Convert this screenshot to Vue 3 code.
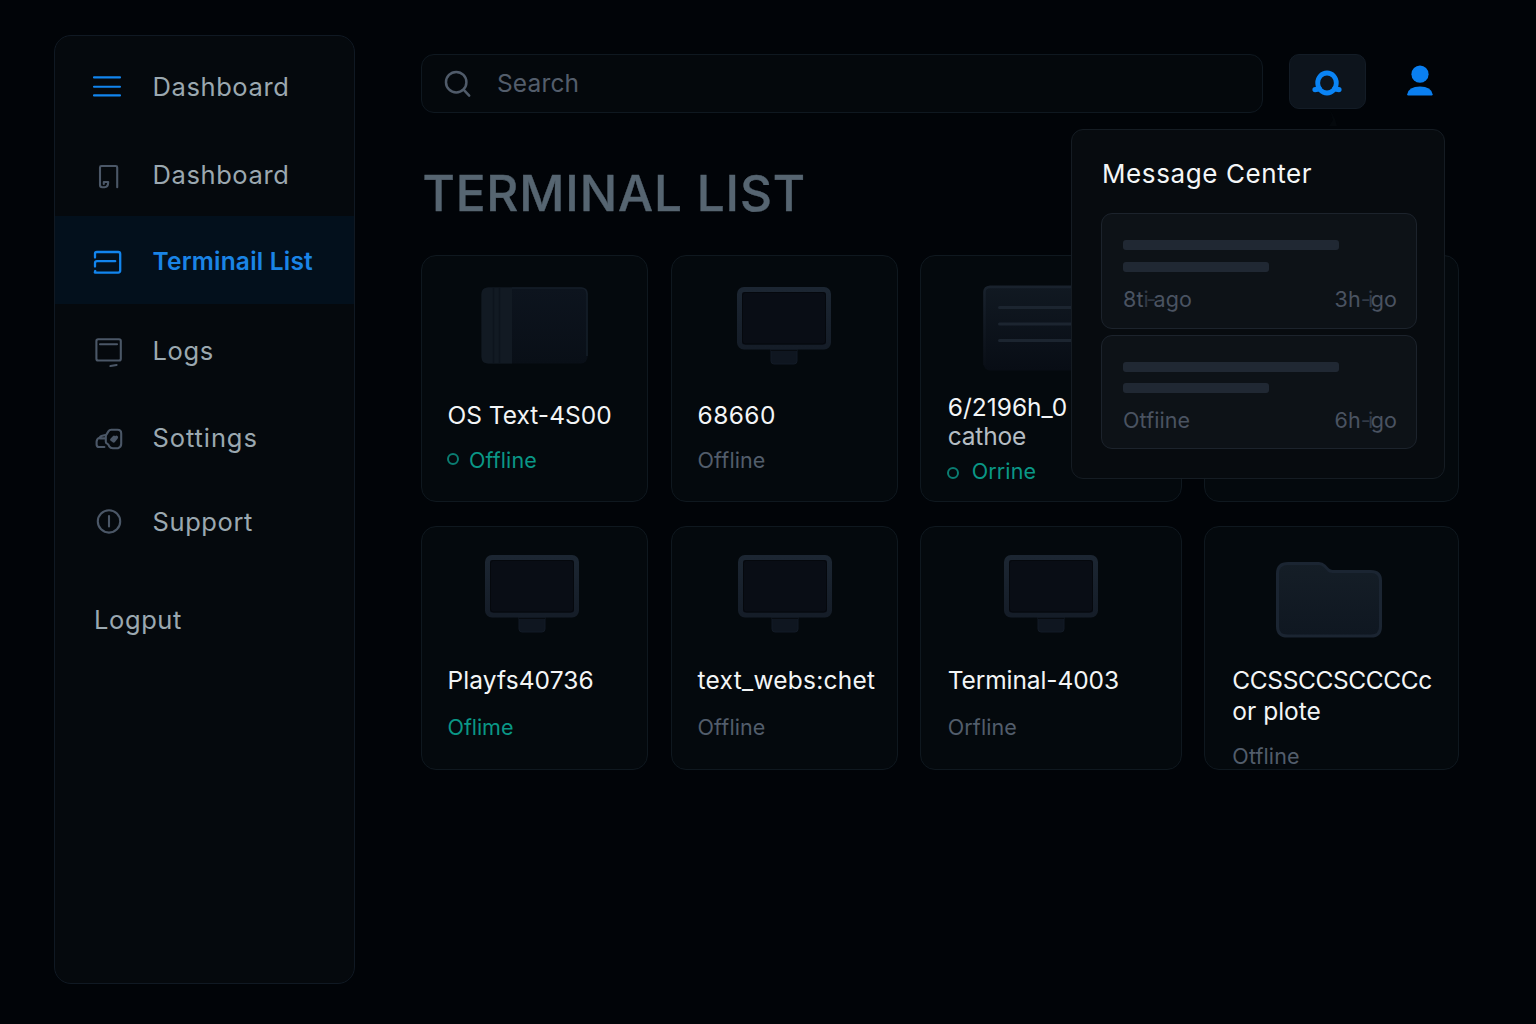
<script setup>
const nav = [
  { icon: 'menu', label: 'Dashboard' },
  { icon: 'board', label: 'Dashboard' },
  { icon: 'terminal', label: 'Terminail List', active: true },
  { icon: 'logs', label: 'Logs' },
  { icon: 'settings', label: 'Sottings' },
  { icon: 'support', label: 'Support' },
]

const terminals = [
  { id: 'os', art: 'drive', name: ['OS Text-4S00'], status: 'Offline', online: true, ring: true },
  { id: 'num', art: 'monitor', name: ['68660'], status: 'Offline' },
  { id: 'cathoe', art: 'rack', name: ['6/2196h_0', 'cathoe'], status: 'Orrine', online: true, ring: true },
  { id: 'blank', name: [] },
  { id: 'play', art: 'monitor', name: ['Playfs40736'], status: 'Oflime', online: true },
  { id: 'webs', art: 'monitor', name: ['text_webs:chet'], status: 'Offline' },
  { id: 'term', art: 'monitor', name: ['Terminal-4003'], status: 'Orfline' },
  { id: 'folder', art: 'folder', name: ['CCSSCCSCCCCc', 'or plote'], status: 'Otfline' },
]

// Each stamp is split in three: the middle part is set tighter and dimmer.
const messages = [
  { left: ['8t', 'i-', 'ago'], right: ['3h', '-i', 'go'] },
  { left: ['Otfiine', '', ''], right: ['6h', '-i', 'go'] },
]
</script>

<template>
  <div class="page">
    <aside class="sidebar">
      <nav>
        <a v-for="item in nav" :key="item.icon" class="nav-item" :class="[item.icon, { active: item.active }]">
          <svg class="nav-icon" viewBox="0 0 40 40" fill="none" stroke="currentColor" stroke-width="2.1" stroke-linecap="round" stroke-linejoin="round">
            <path v-if="item.icon === 'menu'" d="M6 9.4H32M6 18.7H32M6 27.4H32" />
            <path v-else-if="item.icon === 'board'" d="M29.2 33.2V13.4Q29.2 12 27.8 12H13.4Q12 12 12 13.4V31Q12 33.2 14.2 33.2H16.6Q20.2 33.2 20.2 28H15.8V30" />
            <path v-else-if="item.icon === 'terminal'" d="M7 17.6V13.6Q7 12 8.8 12H30.2Q32.2 12 32.2 14V30.6Q32.2 32.6 30.2 32.6H6.8L7.2 31M27.2 21.2H9Q7 21.2 7 23.2V26.6" />
            <template v-else-if="item.icon === 'logs'">
              <rect x="8.4" y="8.3" width="24.4" height="21.2" rx="1.8" />
              <path d="M12 13.2H29M22.4 35L28.6 34" />
            </template>
            <template v-else-if="item.icon === 'settings'">
              <path d="M18.4 15.6L20.4 12.4Q21.4 10.8 23.2 10.8H29.6Q33.2 10.8 33.2 14.4V24.8Q33.2 28.2 30 29.2H24.8Q22.4 29.2 21.2 27.4Q20.8 25.4 18.8 24.4Q17.8 24 17.8 22.4V17.6Q17.8 16.4 18.4 15.6Z" />
              <path d="M17.4 16L13.4 17Q12.4 17.4 11.6 18.6Q8.6 19.8 8.6 22.8V25.4Q8.6 28 11.2 28H16.4M12 19.4H16.6" />
              <path d="M23.8 20.6L26 18.4M25.6 22L28.4 18.4" stroke-width="3.4" />
            </template>
            <template v-else>
              <circle cx="21" cy="19.4" r="11.2" />
              <path d="M21 14V24.4" />
            </template>
          </svg>
          <span class="nav-label">{{ item.label }}</span>
        </a>
      </nav>
      <a class="logout">Logput</a>
    </aside>

    <main class="main">
      <header class="topbar">
        <label class="search">
          <svg class="search-icon" viewBox="0 0 28 28" fill="none" stroke="currentColor" stroke-width="2.5" stroke-linecap="round">
            <circle cx="12.2" cy="12.2" r="10.2" />
            <path d="M19.8 19.8L25.2 25.6" />
          </svg>
          <span>Search</span>
        </label>
        <div class="alerts">
          <button class="bell" aria-label="Messages">
            <svg width="32" height="28" viewBox="0 0 32 28">
              <ellipse cx="16" cy="14" rx="9.3" ry="10" fill="none" stroke="#0a84f5" stroke-width="4.8" />
              <path d="M4.1 20.6Q6.4 20.6 8 19.4M27.9 20.6Q25.6 20.6 24 19.4" fill="none" stroke="#0a84f5" stroke-width="5.4" stroke-linecap="round" />
            </svg>
          </button>
          <svg class="beak" width="20" height="18" viewBox="0 0 20 18"><path d="M8 1L13 10L15 17H7L11 11Z" /></svg>
          <section class="popup">
            <h2>Message Center</h2>
            <article v-for="(m, i) in messages" :key="i" class="message">
              <i class="bar long"></i>
              <i class="bar short"></i>
              <div class="meta">
                <span>{{ m.left[0] }}<span class="dim">{{ m.left[1] }}</span>{{ m.left[2] }}</span>
                <span>{{ m.right[0] }}<span class="dim">{{ m.right[1] }}</span>{{ m.right[2] }}</span>
              </div>
            </article>
          </section>
        </div>
        <svg class="user" width="28" height="32" viewBox="0 0 28 32" fill="#0a7ff0">
          <circle cx="14" cy="9.2" r="8.6" />
          <path d="M1.2 29.2Q2.6 21.4 14 21.4Q25.2 21.4 26.6 29.2Q26.6 30.4 25.6 30.4H2.2Q1.2 30.4 1.2 29.2Z" />
        </svg>
      </header>

      <h1>TERMINAL LIST</h1>

      <div class="grid">
        <article v-for="c in terminals" :key="c.id" class="card" :class="c.id">
          <div class="art">
            <svg v-if="c.art === 'monitor'" width="94" height="79" viewBox="0 0 94 79">
              <path d="M34 62H60V74Q60 77 57 77H37Q34 77 34 74Z" fill="#0f1620" stroke="#131b26" />
              <path d="M34 63.2H60" stroke="#05090d" stroke-width="1.2" />
              <rect x="2.5" y="2.5" width="89" height="57.5" rx="4.5" fill="#090d15" stroke="url(#bezel)" stroke-width="5" />
              <rect x="5.5" y="5.5" width="83" height="51.5" rx="3" fill="none" stroke="#05080d" />
            </svg>
            <svg v-else-if="c.art === 'drive'" width="107" height="77" viewBox="0 0 107 77">
              <rect x=".5" y=".5" width="106" height="76" rx="6.5" fill="url(#drive)" />
              <path d="M7 .5H31V76.5H7Q.5 76.5 .5 70V7Q.5 .5 7 .5Z" fill="#121a23" />
              <path d="M12.5 1V76M18.5 1V76" stroke="#0d141d" stroke-width="1.5" />
              <path d="M31 1H100Q106 1 106 7V69" fill="none" stroke="#151e29" stroke-width="1.6" />
            </svg>
            <svg v-else-if="c.art === 'rack'" width="136" height="86" viewBox="0 0 136 86">
              <rect x=".5" y=".5" width="135" height="85" rx="6.5" fill="url(#rack)" />
              <path d="M1.5 80V7Q1.5 2 7 2H129" fill="none" stroke="url(#rackEdge)" stroke-width="2.4" />
              <path d="M16.5 22.5H120M16.5 39H120M16.5 55.5H120" stroke="#1c2530" stroke-width="3" stroke-linecap="round" />
            </svg>
            <svg v-else-if="c.art === 'folder'" width="106" height="76" viewBox="0 0 106 76">
              <path d="M12 1.5H43Q46 1.5 48.4 3.8L52.4 8Q54 9.4 56.6 9.4H95Q104.5 9.4 104.5 18.6V64.4Q104.5 74 95 74H11.5Q1.5 74 1.5 64.4V11.5Q1.5 1.5 12 1.5Z" fill="url(#folder)" stroke="#1b2532" stroke-width="3" />
            </svg>
          </div>
          <div v-if="c.name.length" class="name"><div v-for="line in c.name" :key="line">{{ line }}</div></div>
          <div v-if="c.status" class="status" :class="{ online: c.online }">
            <i v-if="c.ring" class="ring"></i><span>{{ c.status }}</span>
          </div>
        </article>
      </div>
    </main>

    <svg class="defs" width="0" height="0">
      <defs>
        <linearGradient id="bezel" x1="0" y1="0" x2="0" y2="1"><stop offset="0" stop-color="#1c2632" /><stop offset="1" stop-color="#151d28" /></linearGradient>
        <linearGradient id="drive" x1="0" y1="0" x2="0" y2="1"><stop offset="0" stop-color="#0d141e" /><stop offset="1" stop-color="#090f17" /></linearGradient>
        <linearGradient id="rack" x1="0" y1="0" x2="0" y2="1"><stop offset="0" stop-color="#111922" /><stop offset="1" stop-color="#080d15" /></linearGradient>
        <linearGradient id="rackEdge" x1="0" y1="0" x2="0" y2="1"><stop offset="0" stop-color="#19222d" /><stop offset="1" stop-color="#0a0f17" /></linearGradient>
        <linearGradient id="folder" x1="0" y1="0" x2="0" y2="1"><stop offset="0" stop-color="#151e27" /><stop offset="1" stop-color="#0f1721" /></linearGradient>
      </defs>
    </svg>
  </div>
</template>

<style>
body { background: #010408; }
</style>

<style scoped>
* { box-sizing: border-box; }
.page {
  display: flex;
  width: 1536px;
  height: 1024px;
  padding: 35px 0 0 54px;
  background: #010408;
  font-family: Inter, "Liberation Sans", sans-serif;
  overflow: hidden;
}
.defs { position: absolute; }

.sidebar {
  width: 301px;
  height: 949px;
  padding-top: 8px;
  flex: none;
  border: 1px solid #101923;
  border-radius: 17px;
  background: #05090d;
  color: #9ba8b0;
  font-size: 25.5px;
  line-height: 32px;
  letter-spacing: 0.6px;
}
.nav-item {
  display: flex;
  align-items: center;
  gap: 24.5px;
  height: 84px;
  padding-left: 33px;
}
.nav-icon { width: 40px; height: 40px; color: #4b5767; flex: none; }
.menu { height: 88px; }
.menu .nav-label { margin-top: -2px; }
.menu .nav-icon { color: #1285ee; }
.board .nav-label { margin-top: 2px; }
.active {
  height: 88px;
  background: #03101c;
  color: #1a84e6;
  font-size: 24.5px;
  font-weight: 600;
  letter-spacing: 0.2px;
}
.active .nav-label { margin-top: 1px; }
.active .nav-icon { color: #1285ee; stroke-width: 2.3; }
.logs { height: 93px; }
.settings { height: 83px; letter-spacing: 0.9px; }
.settings .nav-label { margin-top: -2px; }
.logout { display: flex; align-items: center; height: 88px; margin-top: 12px; padding-left: 39px; }

.main { width: 1039px; margin-left: 66px; padding-top: 19px; }
.topbar { display: flex; align-items: flex-start; height: 59px; }
.search {
  display: flex;
  align-items: center;
  width: 842px;
  height: 59px;
  padding: 0 0 2px 22px;
  border: 1px solid #0f1820;
  border-radius: 13px;
  background: #04080c;
  color: #535d6b;
  font-size: 24.5px;
  letter-spacing: 0.15px;
}
.search-icon { width: 28px; height: 28px; margin: 2px 25px 0 0; color: #505b6a; }
.alerts { position: relative; margin-left: 26px; }
.bell {
  display: flex;
  align-items: center;
  justify-content: center;
  width: 77px;
  height: 55px;
  padding: 2px 2px 0 0;
  border: 1px solid #131c26;
  border-radius: 10px;
  background: #0d141c;
}
.user { margin: 11px 0 0 40px; }
.beak { position: absolute; left: 33px; top: 55px; fill: #04080c; }
.popup {
  position: absolute;
  z-index: 2;
  top: 75px;
  left: -218px;
  width: 374px;
  height: 350px;
  padding: 28px 27px 0 29px;
  border: 1px solid #151c23;
  border-radius: 12px;
  background: #070b0f;
}
.popup h2 { margin: 0 0 23px 1px; color: #f4f6f7; font-size: 26px; line-height: 32px; font-weight: 400; letter-spacing: 0.6px; white-space: nowrap; }
.message {
  width: 316px;
  height: 116px;
  padding: 26px 19px 0 21px;
  border: 1px solid #1c232c;
  border-radius: 11px;
  background: #0d1217;
}
.message + .message { height: 114px; margin-top: 6px; }
.message + .message .short { margin-top: 11px; }
.bar { display: block; height: 10px; border-radius: 3px; background: #202833; }
.long { width: 216px; }
.short { width: 146px; margin-top: 12px; }
.meta { display: flex; justify-content: space-between; margin-top: 14px; color: #4a5361; font-size: 21.5px; line-height: 26px; letter-spacing: 0.1px; white-space: nowrap; }
.dim { color: #323a46; letter-spacing: -2.6px; }

h1 { margin: 50px 0 32px 1.5px; color: #566571; font-size: 49.5px; line-height: 60px; font-weight: 500; letter-spacing: 0.85px; white-space: nowrap; -webkit-text-stroke: 0.4px #566571; }
.grid {
  display: grid;
  grid-template-columns: 227.4px 227px 262.4px 255px;
  grid-template-rows: 247px 244px;
  gap: 24px 22.2px;
}
.card {
  padding-left: 26px;
  border: 1px solid #0f181f;
  border-radius: 15px;
  background: #04090d;
  white-space: nowrap;
}
.os, .play { padding-left: 25.5px; }
.art { display: flex; justify-content: center; align-items: flex-start; height: 144px; margin-left: -26px; padding-top: 31px; }
.name { color: #f3f5f6; font-size: 24.5px; line-height: 30px; letter-spacing: 0; }
.status { display: flex; align-items: center; margin-top: 17px; color: #525d6b; font-size: 21.5px; line-height: 26px; letter-spacing: 0.1px; }
.online { color: #0a9786; }
.ring { width: 12px; height: 12px; margin: -3px 10px 0 -0.5px; border: 2.6px solid #0a7d71; border-radius: 50%; }
.num .name { letter-spacing: 0.4px; }
.cathoe, .folder, .term { padding-left: 27px; }
.cathoe .art { height: 137px; padding-top: 29px; }
.cathoe .name { line-height: 28.5px; }
.cathoe .name div + div { color: #b5bdc3; letter-spacing: -0.2px; }
.cathoe .status { margin-top: 8px; }
.cathoe .ring { margin: 3px 12.5px 0 -0.5px; }
.play .art, .webs .art, .term .art, .folder .art { height: 138px; padding-top: 28px; }
.play .art { padding-right: 4px; }
.play .name { letter-spacing: 0.1px; }
.play .status { letter-spacing: -0.05px; }
.webs .name { letter-spacing: 0.25px; }
.webs .art { padding-left: 1px; }
.term .name { letter-spacing: -0.1px; }
.play .status, .webs .status, .term .status { margin-top: 19px; }
.folder .art { padding: 35px 7px 0 0; }
.folder .name { line-height: 31px; }
.folder .name div:first-child { letter-spacing: -0.4px; }
.folder .status { margin-top: 16px; }
</style>
